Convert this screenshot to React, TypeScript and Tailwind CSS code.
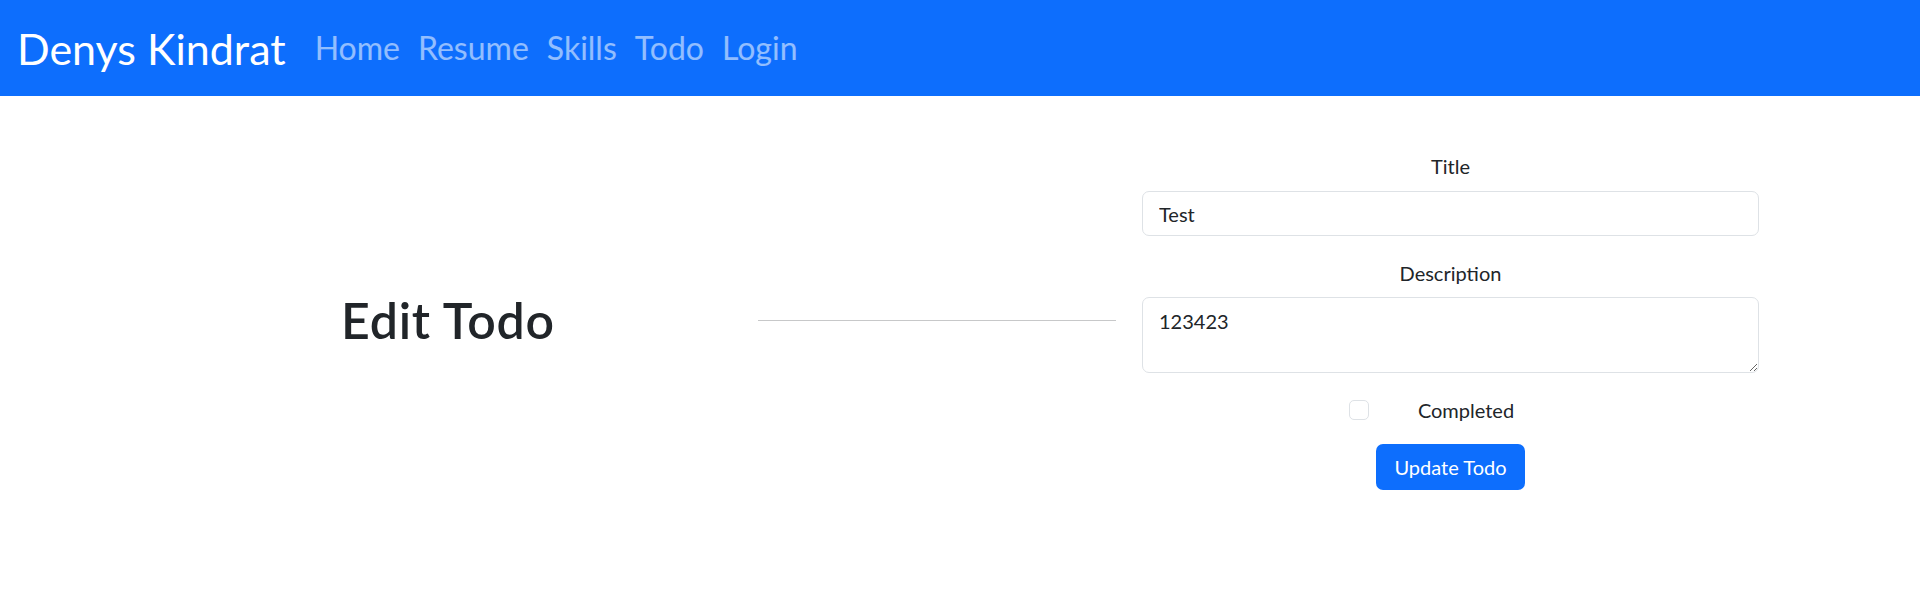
import { useState } from "react"

// Top navigation bar
const Navbar = () => {
  const links = ["Home", "Resume", "Skills", "Todo", "Login"]
  return (
    <nav className="h-[96px] bg-[#0d6efd] flex items-center pl-[17px]">
      <a className="text-white text-[43px] leading-none mr-[20px]">Denys Kindrat</a>
      <div className="flex items-center">
        {links.map((link) => (
          <a key={link} className="text-white/55 text-[32px] leading-none px-[9px]">
            {link}
          </a>
        ))}
      </div>
    </nav>
  )
}

// Edit form on the right
const EditForm = () => {
  const [title, setTitle] = useState("Test")
  const [description, setDescription] = useState("123423")
  const [completed, setCompleted] = useState(false)

  return (
    <form className="w-[617px] flex flex-col text-[20px] leading-[30px] text-[#212529]">
      <label className="text-center mb-[10px]">Title</label>
      <input
        value={title}
        onChange={(e) => setTitle(e.target.value)}
        className="h-[45px] px-[16px] border border-[#dee2e6] rounded-[7px] outline-none"
      />
      <label className="text-center mt-[22px] mb-[9px]">Description</label>
      <textarea
        value={description}
        onChange={(e) => setDescription(e.target.value)}
        className="h-[76px] px-[16px] py-[8px] border border-[#dee2e6] rounded-[7px] outline-none"
      />
      <div className="flex items-center justify-center mt-[22px]">
        <button
          type="button"
          onClick={() => setCompleted(!completed)}
          className={`w-[20px] h-[20px] rounded-[5px] border ${completed ? "bg-[#0d6efd] border-[#0d6efd]" : "border-[#dee2e6] bg-white"}`}
        />
        <span className="ml-[49px]">Completed</span>
        <span className="w-[38px]" />
      </div>
      <div className="flex justify-center mt-[19px]">
        <button
          type="button"
          className="h-[46px] px-[18px] bg-[#0d6efd] text-white rounded-[7px]"
        >
          Update Todo
        </button>
      </div>
    </form>
  )
}

export default function App() {
  return (
    <div className="min-h-screen bg-white font-['Lato',sans-serif]">
      <Navbar />
      <main className="flex items-center pt-[55px]">
        <div className="w-[758px] pl-[341px]">
          <h1 className="text-[50px] tracking-[0.8px] font-semibold text-[#212529] leading-tight">Edit Todo</h1>
        </div>
        <hr className="w-[358px] border-t border-[#212529]/25" />
        <div className="ml-[26px]">
          <EditForm />
        </div>
      </main>
    </div>
  )
}
